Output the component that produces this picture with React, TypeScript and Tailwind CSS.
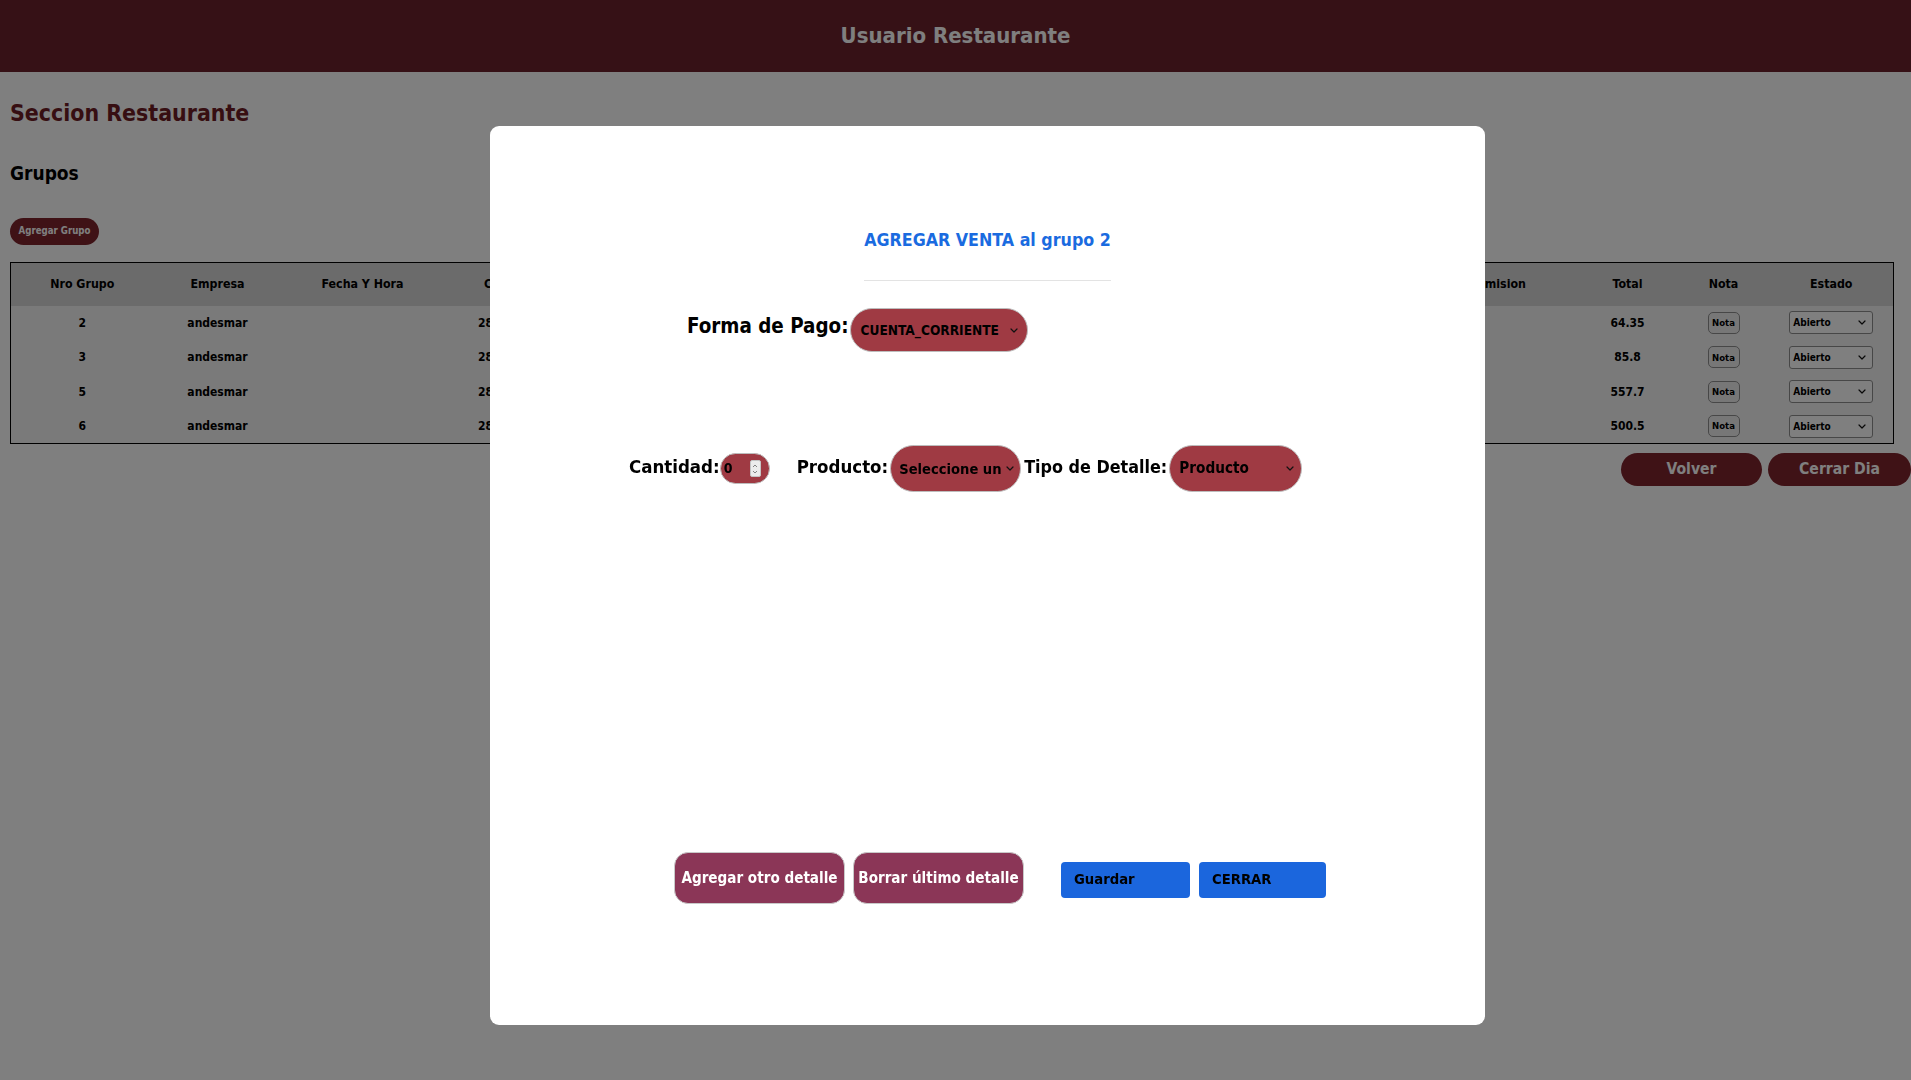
const grupos = [
  { nro: 2, empresa: 'andesmar', fecha: '28/11/2023', total: '64.35' },
  { nro: 3, empresa: 'andesmar', fecha: '28/11/2023', total: '85.8' },
  { nro: 5, empresa: 'andesmar', fecha: '28/11/2023', total: '557.7' },
  { nro: 6, empresa: 'andesmar', fecha: '28/11/2023', total: '500.5' },
];

const columnas = [
  { label: 'Nro Grupo', w: 'w-[143px]' },
  { label: 'Empresa', w: 'w-[128px]' },
  { label: 'Fecha Y Hora', w: 'w-[162px]' },
  { label: 'Cantidad', w: 'w-[137px]' },
  { label: 'Mesa', w: 'w-[140px]' },
  { label: 'Mozo', w: 'w-[160px]' },
  { label: 'Detalle', w: 'w-[220px]' },
  { label: 'Observaciones', w: 'w-[317px]' },
  { label: 'Comision', w: 'w-[160px]' },
  { label: 'Total', w: 'w-[100px]' },
  { label: 'Nota', w: 'w-[92px]' },
  { label: 'Estado', w: 'w-[124px]' },
];

const Chevron = ({ className = '' }: { className?: string }) => (
  <svg width="8" height="5" viewBox="0 0 8 5" className={`shrink-0 ${className}`}>
    <path d="M1 1l3 3 3-3" fill="none" stroke="#111" strokeWidth="1.2" strokeLinecap="round" strokeLinejoin="round" />
  </svg>
);

const Spinner = () => (
  <div className="w-[11px] h-[17px] bg-[#ececec] border border-[#c4c4c4] rounded-[2px] flex flex-col items-center justify-center gap-[2px]">
    <svg width="6" height="4" viewBox="0 0 6 4">
      <path d="M1 3l2-2 2 2" fill="none" stroke="#777" strokeWidth="0.9" />
    </svg>
    <svg width="6" height="4" viewBox="0 0 6 4">
      <path d="M1 1l2 2 2-2" fill="none" stroke="#777" strokeWidth="0.9" />
    </svg>
  </div>
);

function Tabla() {
  return (
    <table className="table-fixed w-[1883px] border border-black border-collapse">
      <thead>
        <tr className="bg-[#d6d6d6]">
          {columnas.map((c) => (
            <th key={c.label} className={`${c.w} h-[43px] text-[12.3px] font-bold text-black text-center whitespace-nowrap`}>
              {c.label}
            </th>
          ))}
        </tr>
      </thead>
      <tbody className="bg-[#f5f5f5]">
        {grupos.map((g) => (
          <tr key={g.nro} className="h-[34.5px] text-[12px] font-bold text-black text-center">
            <td>{g.nro}</td>
            <td>{g.empresa}</td>
            <td></td>
            <td>{g.fecha}</td>
            <td>1</td>
            <td>Juan</td>
            <td>Almuerzo</td>
            <td></td>
            <td></td>
            <td>{g.total}</td>
            <td>
              <button className="w-[32px] h-[22px] bg-[#efefef] border border-[#8f8f8f] rounded-[5px] text-[9.5px] font-bold leading-none">
                Nota
              </button>
            </td>
            <td>
              <div className="mx-auto w-[84px] h-[23px] bg-white border border-[#8f8f8f] rounded-[3px] flex items-center justify-between pl-[3px] pr-[6px] text-[10px] font-bold">
                <span>Abierto</span>
                <Chevron />
              </div>
            </td>
          </tr>
        ))}
      </tbody>
    </table>
  );
}

function ModalVenta() {
  return (
    <div className="fixed inset-0 z-50 bg-black/50">
      <div className="absolute left-[490px] top-[126px] w-[995px] h-[899px] bg-white rounded-[9px] flex flex-col">
        <div className="self-center mt-[100px] flex flex-col items-stretch">
          <h2 className="text-[17.7px] font-bold text-[#1a6be0] leading-[28px] whitespace-nowrap">
            AGREGAR VENTA al grupo 2
          </h2>
          <hr className="mt-[26px] border-t border-[#e3e3e3]" />
        </div>

        <div className="mt-[27px] pl-[197px] flex items-center">
          <span className="text-[20.4px] font-bold text-black leading-none -mt-[7px] whitespace-nowrap">Forma de Pago:</span>
          <div className="ml-[1px] w-[178px] h-[44px] rounded-full bg-[#9f3a43] border border-[#bdbdbd] flex items-center justify-between pl-[10px] pr-[9px]">
            <span className="text-[13.6px] font-bold text-black whitespace-nowrap">CUENTA_CORRIENTE</span>
            <Chevron />
          </div>
        </div>

        <div className="mt-[93px] pl-[139px] flex items-center">
          <span className="text-[18.5px] font-bold text-black leading-none -mt-[3px] whitespace-nowrap">Cantidad:</span>
          <div className="w-[50px] h-[31px] rounded-full bg-[#9f3a43] border border-[#bdbdbd] flex items-center justify-between pl-[3px] pr-[8px]">
            <span className="text-[14px] font-bold text-black">0</span>
            <Spinner />
          </div>
          <span className="ml-[27px] text-[18.5px] font-bold text-black leading-none -mt-[3px] whitespace-nowrap">Producto:</span>
          <div className="ml-[2px] w-[131px] h-[47px] rounded-full bg-[#9f3a43] border border-[#bdbdbd] flex items-center pl-[8px] pr-[6px]">
            <span className="w-[107px] overflow-hidden whitespace-nowrap text-[14.6px] font-bold text-black">
              Seleccione un producto
            </span>
            <Chevron className="ml-[1px]" />
          </div>
          <span className="ml-[3px] text-[17.8px] font-bold text-black leading-none -mt-[3px] whitespace-nowrap">Tipo de Detalle:</span>
          <div className="ml-[2px] w-[133px] h-[47px] rounded-full bg-[#9f3a43] border border-[#bdbdbd] flex items-center justify-between pl-[9px] pr-[7px]">
            <span className="text-[15.2px] font-bold text-black">Producto</span>
            <Chevron />
          </div>
        </div>

        <div className="mt-[360px] pl-[184px] flex items-center">
          <button className="w-[171px] h-[52px] rounded-[14px] bg-[#8b3657] border border-[#c9c9c9] text-white text-[15.1px] font-bold whitespace-nowrap">
            Agregar otro detalle
          </button>
          <button className="ml-[8px] w-[171px] h-[52px] rounded-[14px] bg-[#8b3657] border border-[#c9c9c9] text-white text-[15.1px] font-bold whitespace-nowrap">
            Borrar último detalle
          </button>
          <button className="ml-[37px] w-[129px] h-[36px] rounded-[4px] bg-[#1b66dd] text-black text-[14.7px] font-bold text-left pl-[13px] mt-[3px]">
            Guardar
          </button>
          <button className="ml-[9px] w-[127px] h-[36px] rounded-[4px] bg-[#1b66dd] text-black text-[14.7px] font-bold text-left pl-[13px] mt-[3px]">
            CERRAR
          </button>
        </div>
      </div>
    </div>
  );
}

export default function App() {
  return (
    <div className="min-h-screen bg-white font-['Liberation_Sans_Narrow','DejaVu_Sans_Condensed','Liberation_Sans',sans-serif]">
      <header className="h-[72px] bg-[#6c222c] flex items-center justify-center">
        <h1 className="text-[22px] font-bold text-white -mt-[2px]">Usuario Restaurante</h1>
      </header>

      <main className="pl-[10px] pr-[18px]">
        <h2 className="mt-[24px] text-[22.9px] leading-[34px] font-bold text-[#6e1c25]">Seccion Restaurante</h2>
        <h3 className="mt-[29px] text-[19px] leading-[28px] font-bold text-black">Grupos</h3>
        <button className="block mt-[31px] w-[89px] h-[27px] rounded-full bg-[#7e242c] text-white text-[9.6px] font-bold whitespace-nowrap">
          Agregar Grupo
        </button>
        <div className="mt-[17px]">
          <Tabla />
        </div>
        <div className="mt-[9px] -mr-[18px] flex justify-end gap-[6px]">
          <button className="w-[141px] h-[33px] rounded-full bg-[#7e242c] text-white text-[15.6px] font-bold">Volver</button>
          <button className="w-[143px] h-[33px] rounded-full bg-[#7e242c] text-white text-[15.6px] font-bold">Cerrar Dia</button>
        </div>
      </main>

      <ModalVenta />
    </div>
  );
}
